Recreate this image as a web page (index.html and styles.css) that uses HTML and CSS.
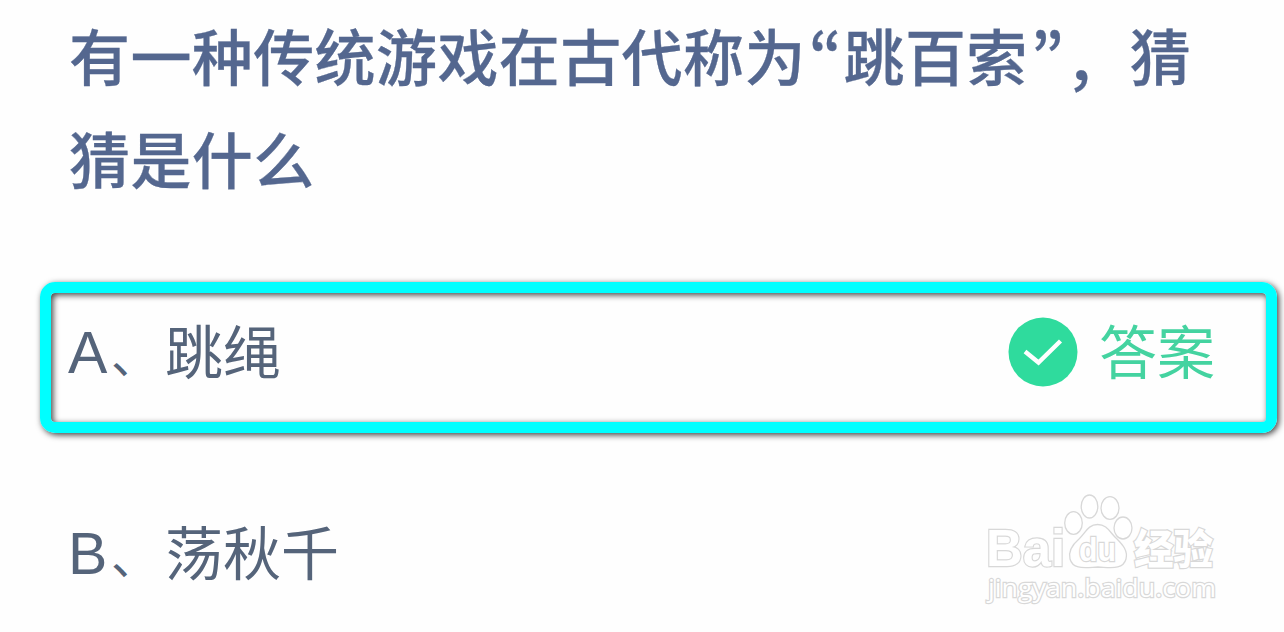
FILE: index.html
```
<!DOCTYPE html>
<html lang="zh-CN">
<head>
    <meta charset="UTF-8">
    <meta name="viewport" content="width=device-width, initial-scale=1.0">
    <title>猜猜是什么</title>
    <link rel="stylesheet" href="styles.css">
</head>
<body>
    <div class="quiz">
        <h1 class="question">有一种传统游戏在古代称为<span class="quote">“</span>跳百索<span class="quote">”</span><span class="comma">，</span>猜<br>猜是什么</h1>
        <div class="option correct">
            <div class="label"><span class="letter">A</span><span class="mark">、</span>跳绳</div>
            <div class="answer">
                <svg class="check" viewBox="0 0 70 70">
                    <circle cx="35" cy="35" r="34.5" fill="#2fdb9d"/>
                    <path d="M17 34.500L30.500 45.500L52.500 24" fill="none" stroke="#fff" stroke-width="4.4"/>
                </svg>
                <span>答案</span>
            </div>
        </div>
        <div class="option">
            <div class="label"><span class="letter">B</span><span class="mark">、</span>荡秋千</div>
        </div>
    </div>
    <svg class="watermark" viewBox="0 0 240 120">
        <g class="outline">
            <text class="brand" x="6" y="76" textLength="79" lengthAdjust="spacingAndGlyphs">Bai</text>
            <ellipse cx="93.5" cy="33" rx="8.8" ry="11.3"/>
            <ellipse cx="109.5" cy="16.5" rx="8.3" ry="11.5"/>
            <ellipse cx="130" cy="18" rx="9" ry="11.3"/>
            <ellipse cx="143" cy="38" rx="9" ry="11"/>
            <path d="M117.500 34.500C108 34.500 105.500 43 99 49C92 55 88 61 90 69C93 80 105 77.500 118 77C131 77.500 143 80 146 69C148 61 143 55 137 49C130 43 127.500 34.500 117.500 34.500Z"/>
            <text class="du" x="99" y="71" textLength="37" lengthAdjust="spacingAndGlyphs">du</text>
            <text class="product" x="154" y="74" textLength="79" lengthAdjust="spacingAndGlyphs">经验</text>
            <text class="site" x="8" y="107" textLength="228" lengthAdjust="spacingAndGlyphs">jingyan.baidu.com</text>
        </g>
    </svg>
</body>
</html>
```
FILE: styles.css
```
body {
    margin: 0;
    background: #fefefe;
    font-family: "Noto Sans CJK SC", sans-serif;
    overflow: hidden;
}

.quiz {
    padding: 3px 6px 0 40px;
}

.question {
    margin: 0 0 73px 29px;
    color: #54678f;
    font-size: 61px;
    font-weight: 500;
    letter-spacing: 0.4px;
    line-height: 103px;
    white-space: nowrap;
    -webkit-text-stroke: 0.3px #54678f;
}

.quote {
    padding: 0 1px 0 3px;
    font-size: 64px;
    line-height: 1;
    vertical-align: -5px;
    font-feature-settings: "pwid";
}

.comma {
    padding-right: 3px;
    line-height: 1;
    vertical-align: -4px;
}

.option {
    display: flex;
    justify-content: space-between;
    align-items: center;
    box-sizing: border-box;
    height: 149px;
    padding: 0 51px 16px 17px;
    border: 11px solid transparent;
    color: #55647a;
    font-size: 58px;
    line-height: 80px;
}

.correct {
    height: 151px;
    margin: 0 1px 50px 0;
    padding-bottom: 18px;
    border-color: #00ffff;
    border-radius: 15px;
    box-shadow: 2px 2px 6px rgba(0, 0, 0, 0.75), inset 2px 2px 6px rgba(0, 0, 0, 0.75);
}

.label {
    display: flex;
    height: 80px;
}

.letter {
    width: 43px;
    padding-top: 4px;
    font-family: "Liberation Sans", sans-serif;
    font-size: 59px;
}

.mark {
    width: 54px;
    padding-top: 4px;
    font-size: 47px;
}

.answer {
    display: flex;
    align-items: center;
    gap: 22px;
    color: #44d3a0;
}

.check {
    width: 70px;
    height: 70px;
    margin: 6px -1px 0 0;
}

.watermark {
    position: absolute;
    left: 980px;
    top: 490px;
    width: 240px;
    height: 120px;
}

.outline {
    fill: #fff;
    stroke: #d8d8d8;
    stroke-width: 1.3;
}

.outline text {
    font-family: "Liberation Sans", "Noto Sans CJK SC", sans-serif;
    font-weight: bold;
    paint-order: stroke;
    stroke-width: 2.4;
}

.outline .brand {
    font-size: 52px;
}

.outline .du {
    font-size: 33px;
}

.outline .product {
    font-size: 41px;
    font-weight: 900;
}

.outline .site {
    font-family: "Open Sans", sans-serif;
    font-size: 26px;
    font-weight: normal;
}
```
